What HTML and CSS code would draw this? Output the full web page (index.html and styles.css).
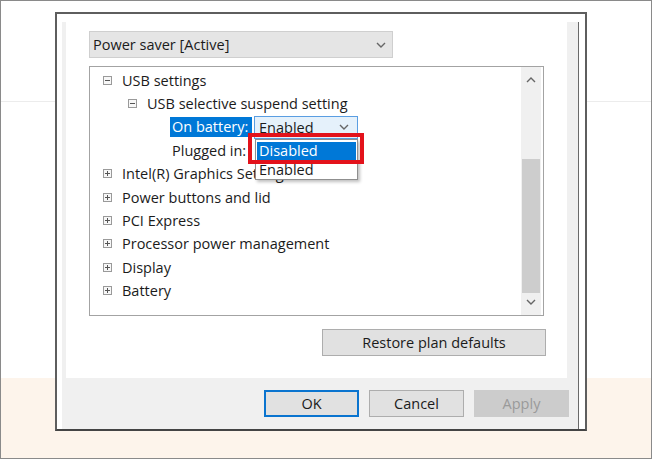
FILE: index.html
```html
<!DOCTYPE html>
<html lang="en">

<head>
    <meta charset="UTF-8">
    <meta name="viewport" content="width=device-width, initial-scale=1.0">
    <title>Power Options - Advanced settings</title>
    <link rel="stylesheet" href="styles.css">
</head>

<body>
    <div class="screen">
        <div class="dialog">
            <div class="frame">
                <div class="panel">
                    <div class="select">
                        <span>Power saver [Active]</span>
                        <svg class="chev" width="10" height="6" viewBox="0 0 10 6"><path d="M1 1 L5 5 L9 1" /></svg>
                    </div>

                    <div class="tree">
                        <div class="items">
                            <div class="row lv0">
                                <svg class="tog" width="9" height="9" viewBox="0 0 9 9"><rect x="0.5" y="0.5" width="8" height="8" /><path d="M2 4.5 H7" /></svg>
                                USB settings
                            </div>
                            <div class="row lv1">
                                <svg class="tog" width="9" height="9" viewBox="0 0 9 9"><rect x="0.5" y="0.5" width="8" height="8" /><path d="M2 4.5 H7" /></svg>
                                USB selective suspend setting
                            </div>
                            <div class="row lv2">
                                <span class="hl">On battery:</span>
                                <div class="combo">
                                    <span>Enabled</span>
                                    <svg class="chev" width="10" height="6" viewBox="0 0 10 6"><path d="M1 1 L5 5 L9 1" /></svg>
                                    <div class="list">
                                        <div class="opt sel">Disabled</div>
                                        <div class="opt">Enabled</div>
                                    </div>
                                    <div class="mark"></div>
                                </div>
                            </div>
                            <div class="row lv2">Plugged in:</div>
                            <div class="row lv0">
                                <svg class="tog" width="9" height="9" viewBox="0 0 9 9"><rect x="0.5" y="0.5" width="8" height="8" /><path d="M2 4.5 H7 M4.5 2 V7" /></svg>
                                Intel(R) Graphics Settings
                            </div>
                            <div class="row lv0">
                                <svg class="tog" width="9" height="9" viewBox="0 0 9 9"><rect x="0.5" y="0.5" width="8" height="8" /><path d="M2 4.5 H7 M4.5 2 V7" /></svg>
                                Power buttons and lid
                            </div>
                            <div class="row lv0">
                                <svg class="tog" width="9" height="9" viewBox="0 0 9 9"><rect x="0.5" y="0.5" width="8" height="8" /><path d="M2 4.5 H7 M4.5 2 V7" /></svg>
                                PCI Express
                            </div>
                            <div class="row lv0">
                                <svg class="tog" width="9" height="9" viewBox="0 0 9 9"><rect x="0.5" y="0.5" width="8" height="8" /><path d="M2 4.5 H7 M4.5 2 V7" /></svg>
                                Processor power management
                            </div>
                            <div class="row lv0">
                                <svg class="tog" width="9" height="9" viewBox="0 0 9 9"><rect x="0.5" y="0.5" width="8" height="8" /><path d="M2 4.5 H7 M4.5 2 V7" /></svg>
                                Display
                            </div>
                            <div class="row lv0">
                                <svg class="tog" width="9" height="9" viewBox="0 0 9 9"><rect x="0.5" y="0.5" width="8" height="8" /><path d="M2 4.5 H7 M4.5 2 V7" /></svg>
                                Battery
                            </div>
                        </div>
                        <div class="scroll">
                            <svg class="arrow" width="10" height="6" viewBox="0 0 10 6"><path d="M1 5 L5 1 L9 5" /></svg>
                            <div class="thumb"></div>
                            <svg class="arrow" width="10" height="6" viewBox="0 0 10 6"><path d="M1 1 L5 5 L9 1" /></svg>
                        </div>
                    </div>

                    <button class="btn restore">Restore plan defaults</button>
                </div>

                <div class="actions">
                    <button class="btn ok">OK</button>
                    <button class="btn">Cancel</button>
                    <button class="btn off">Apply</button>
                </div>
            </div>
        </div>
    </div>
</body>

</html>
```

FILE: styles.css
```css
* {
    margin: 0;
    padding: 0;
    box-sizing: border-box;
}

body {
    font-family: "Open Sans", "Noto Sans", sans-serif;
    font-size: 14.5px;
    color: #1b1b1b;
}

.screen {
    width: 652px;
    height: 459px;
    border: 1px solid #8a8a8a;
    padding: 11px 0 0 54px;
    overflow: hidden;
    background: linear-gradient(180deg, #fff 0, #fff 100px, #ececec 100px, #ececec 101px, #fff 101px, #fff 377px, #fdf4eb 377px);
}

.dialog {
    width: 532px;
    height: 419px;
    border: 2px solid #5e5e5e;
    border-bottom-color: #444;
    background: #fff;
    padding: 8px 0 0 5px;
}

.frame {
    width: 517px;
    height: 407px;
    background: #f0f0f0;
    border-right: 1px solid #6a6a6a;
    padding-left: 4px;
}

.panel {
    width: 501px;
    height: 356px;
    background: #fff;
    padding: 9px 21px 0 23px;
    display: flex;
    flex-direction: column;
}

.select {
    width: 304px;
    height: 27px;
    background: #e5e5e5;
    border: 1px solid #cfcfcf;
    display: flex;
    align-items: center;
    justify-content: space-between;
    padding: 0 6px 0 3px;
}

.chev path,
.arrow path {
    fill: none;
    stroke: #666;
    stroke-width: 1.4;
}

.tree {
    margin-top: 8px;
    width: 455px;
    height: 250px;
    border: 1px solid #a3a3a3;
    display: flex;
}

.items {
    flex: 1;
    padding-top: 2px;
}

.row {
    height: 23.3px;
    display: flex;
    align-items: center;
    white-space: nowrap;
}

.lv0 {
    padding-left: 13px;
}

.lv1 {
    padding-left: 38px;
}

.lv2 {
    padding-left: 82px;
}

.tog {
    margin-right: 10px;
    flex-shrink: 0;
}

.tog rect {
    fill: #f7f7f7;
    stroke: #9a9a9a;
}

.tog path {
    stroke: #555;
    stroke-width: 1;
}

.hl {
    background: #0078d7;
    color: #fff;
    width: 82px;
    height: 20px;
    line-height: 20px;
    padding-left: 2px;
    margin-left: -2px;
}

.combo {
    position: relative;
    margin-left: 2px;
    width: 104px;
    height: 23px;
    background: #e5f1fb;
    border: 1px solid #5a9ee2;
    display: flex;
    align-items: center;
    justify-content: space-between;
    padding: 0 8px 0 4px;
}

.list {
    position: absolute;
    top: 22px;
    left: 0;
    width: 103px;
    height: 41px;
    background: #fff;
    border: 1px solid #8f8f8f;
    box-shadow: 2px 2px 3px rgba(0, 0, 0, 0.25);
    padding: 2px 1px;
    z-index: 2;
}

.opt {
    height: 18px;
    line-height: 18px;
    padding-left: 2px;
}

.opt.sel {
    height: 19px;
    background: #0078d7;
    color: #fff;
}

.mark {
    position: absolute;
    left: -7px;
    top: 16px;
    width: 116px;
    height: 31px;
    border: 4px solid #e3121b;
    z-index: 3;
}

.scroll {
    width: 20px;
    margin-right: 2px;
    background: #f0f0f0;
    display: flex;
    flex-direction: column;
    align-items: center;
    padding-top: 10px;
}

.thumb {
    width: 18px;
    height: 134px;
    background: #cdcdcd;
    margin: 76px 0 6px;
}

.btn {
    font-family: inherit;
    font-size: 14.5px;
    color: #1b1b1b;
    height: 27px;
    background: #e1e1e1;
    border: 1px solid #adadad;
}

.restore {
    align-self: flex-end;
    width: 224px;
    margin-top: 13px;
}

.actions {
    display: flex;
    justify-content: flex-end;
    gap: 10px;
    padding: 12px 9px 0 0;
}

.actions .btn {
    width: 95px;
}

.ok {
    border: 2px solid #0a74cf;
}

.off {
    background: #cccccc;
    border-color: #cccccc;
    color: #9a9a9a;
}
```
